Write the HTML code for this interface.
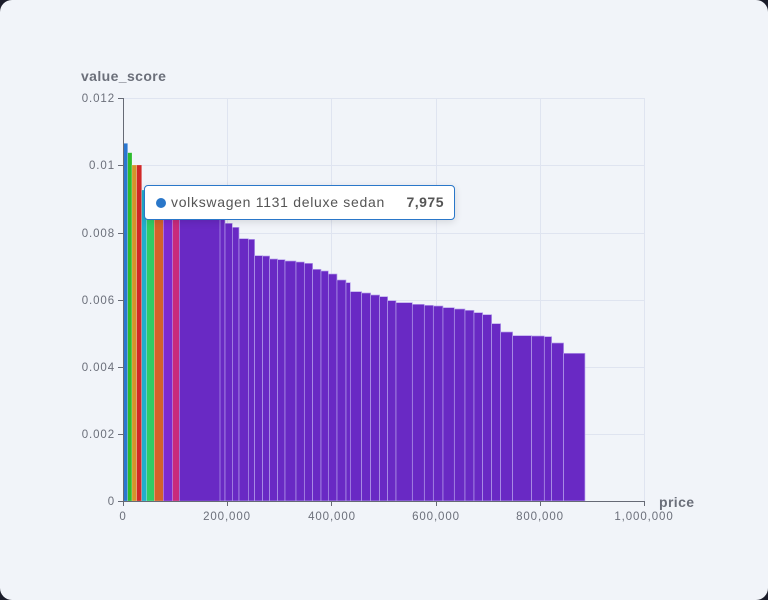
<!DOCTYPE html>
<html><head><meta charset="utf-8"><style>
html,body{margin:0;padding:0;background:#1b1d2a;}
.card{position:absolute;left:0;top:0;width:768px;height:600px;background:#f1f4f9;border-radius:12px;overflow:hidden;}
svg{position:absolute;left:0;top:0;font-family:"Liberation Sans","DejaVu Sans",sans-serif;}
.tt{position:absolute;left:144px;top:185px;width:309px;height:33px;background:#fff;border:1px solid #2a77c9;border-radius:4px;box-shadow:0 2px 8px rgba(0,0,0,0.12);font-family:"Liberation Sans","DejaVu Sans",sans-serif;font-size:14px;color:#555;}
.tt .dot{position:absolute;left:11px;top:12px;width:10px;height:10px;border-radius:50%;background:#2a77c9;}
.tt .l{position:absolute;left:26px;top:8px;letter-spacing:0.7px;}
.tt .v{position:absolute;right:10px;top:8px;font-weight:bold;letter-spacing:0.5px;}
</style></head><body><div class="card">
<svg width="768" height="600" viewBox="0 0 768 600">
<g stroke="#dfe4f0" stroke-width="1">
<line x1="123" y1="98.5" x2="644" y2="98.5"/><line x1="123" y1="165.5" x2="644" y2="165.5"/><line x1="123" y1="233.5" x2="644" y2="233.5"/><line x1="123" y1="300.5" x2="644" y2="300.5"/><line x1="123" y1="367.5" x2="644" y2="367.5"/><line x1="123" y1="434.5" x2="644" y2="434.5"/>
<line x1="227.5" y1="98" x2="227.5" y2="501"/><line x1="331.5" y1="98" x2="331.5" y2="501"/><line x1="436.5" y1="98" x2="436.5" y2="501"/><line x1="540.5" y1="98" x2="540.5" y2="501"/><line x1="644.5" y1="98" x2="644.5" y2="501"/>
</g>
<g stroke="#ffffff" stroke-opacity="0.35" stroke-width="0.6">
<rect x="123.3" y="143.3" width="4.4" height="357.7" fill="#2a77d0"/>
<rect x="127.7" y="152.7" width="4.3" height="348.3" fill="#2dbb2d"/>
<rect x="132" y="165" width="4.7" height="336" fill="#d4942a"/>
<rect x="136.7" y="165" width="5" height="336" fill="#d02828"/>
<rect x="141.7" y="190" width="5" height="311" fill="#20aecb"/>
<rect x="146.7" y="200" width="7.6" height="301" fill="#2ecc66"/>
<rect x="154.3" y="205" width="9" height="296" fill="#d4622a"/>
<rect x="163.3" y="210" width="9.4" height="291" fill="#7d2ad0"/>
<rect x="172.7" y="212" width="6.6" height="289" fill="#c82a7c"/>
<rect x="179.3" y="215" width="41" height="286" fill="#6929c4"/>
</g>
<g transform="translate(220,210) scale(0.3333)" fill="#6929c4" stroke="#b8a3ec" stroke-width="2">
<rect x="0" y="20" width="15" height="853"/>
<rect x="15" y="40" width="22" height="833"/><rect x="37" y="52" width="20" height="821"/><rect x="57" y="86" width="28" height="787"/><rect x="85" y="88" width="19" height="785"/><rect x="104" y="137" width="24" height="736"/><rect x="128" y="138" width="21" height="735"/><rect x="149" y="147" width="24" height="726"/><rect x="173" y="149" width="22" height="724"/><rect x="195" y="153" width="33" height="720"/><rect x="228" y="156" width="25" height="717"/><rect x="253" y="160" width="25" height="713"/><rect x="278" y="178" width="25" height="695"/><rect x="303" y="183" width="22" height="690"/><rect x="325" y="192" width="26" height="681"/><rect x="351" y="210" width="27" height="663"/><rect x="378" y="218" width="13" height="655"/><rect x="391" y="245" width="34" height="628"/><rect x="425" y="249" width="27" height="624"/><rect x="452" y="255" width="27" height="618"/><rect x="479" y="260" width="24" height="613"/><rect x="503" y="272" width="25" height="601"/><rect x="528" y="278" width="49" height="595"/><rect x="577" y="283" width="36" height="590"/><rect x="613" y="286" width="27" height="587"/><rect x="640" y="288" width="29" height="585"/><rect x="669" y="293" width="34" height="580"/><rect x="703" y="297" width="32" height="576"/><rect x="735" y="301" width="27" height="572"/><rect x="762" y="308" width="26" height="565"/><rect x="788" y="314" width="27" height="559"/><rect x="815" y="341" width="27" height="532"/><rect x="842" y="366" width="36" height="507"/><rect x="878" y="377" width="57" height="496"/><rect x="935" y="378" width="38" height="495"/><rect x="973" y="380" width="22" height="493"/><rect x="995" y="399" width="36" height="474"/><rect x="1031" y="430" width="64" height="443"/>
</g>
<g stroke="#666a75" stroke-width="1" fill="none">
<line x1="123.5" y1="98" x2="123.5" y2="501"/><line x1="123" y1="501.5" x2="644" y2="501.5"/>
<line x1="118" y1="98.5" x2="123" y2="98.5"/><line x1="118" y1="165.5" x2="123" y2="165.5"/><line x1="118" y1="233.5" x2="123" y2="233.5"/><line x1="118" y1="300.5" x2="123" y2="300.5"/><line x1="118" y1="367.5" x2="123" y2="367.5"/><line x1="118" y1="434.5" x2="123" y2="434.5"/><line x1="118" y1="501.5" x2="123" y2="501.5"/>
<line x1="123.5" y1="501" x2="123.5" y2="506"/><line x1="227.5" y1="501" x2="227.5" y2="506"/><line x1="331.5" y1="501" x2="331.5" y2="506"/><line x1="436.5" y1="501" x2="436.5" y2="506"/><line x1="540.5" y1="501" x2="540.5" y2="506"/><line x1="644.5" y1="501" x2="644.5" y2="506"/>
</g>
<g fill="#6b6f7a" font-size="11.5" text-anchor="end" letter-spacing="0.9">
<text x="115" y="102">0.012</text><text x="115" y="169">0.01</text><text x="115" y="237">0.008</text><text x="115" y="304">0.006</text><text x="115" y="371">0.004</text><text x="115" y="438">0.002</text><text x="115" y="505">0</text>
</g>
<g fill="#6b6f7a" font-size="11.5" text-anchor="middle" letter-spacing="0.9">
<text x="123" y="520">0</text><text x="227" y="520">200,000</text><text x="332" y="520">400,000</text><text x="436" y="520">600,000</text><text x="540" y="520">800,000</text><text x="644" y="520">1,000,000</text>
</g>
<text x="81" y="81" fill="#6b6f7a" font-size="14" font-weight="bold" letter-spacing="0.4">value_score</text>
<text x="659" y="507" fill="#6b6f7a" font-size="14" font-weight="bold" letter-spacing="0.4">price</text>
</svg>
<div class="tt"><div class="dot"></div><span class="l">volkswagen 1131 deluxe sedan</span><span class="v">7,975</span></div>
</div></body></html>
